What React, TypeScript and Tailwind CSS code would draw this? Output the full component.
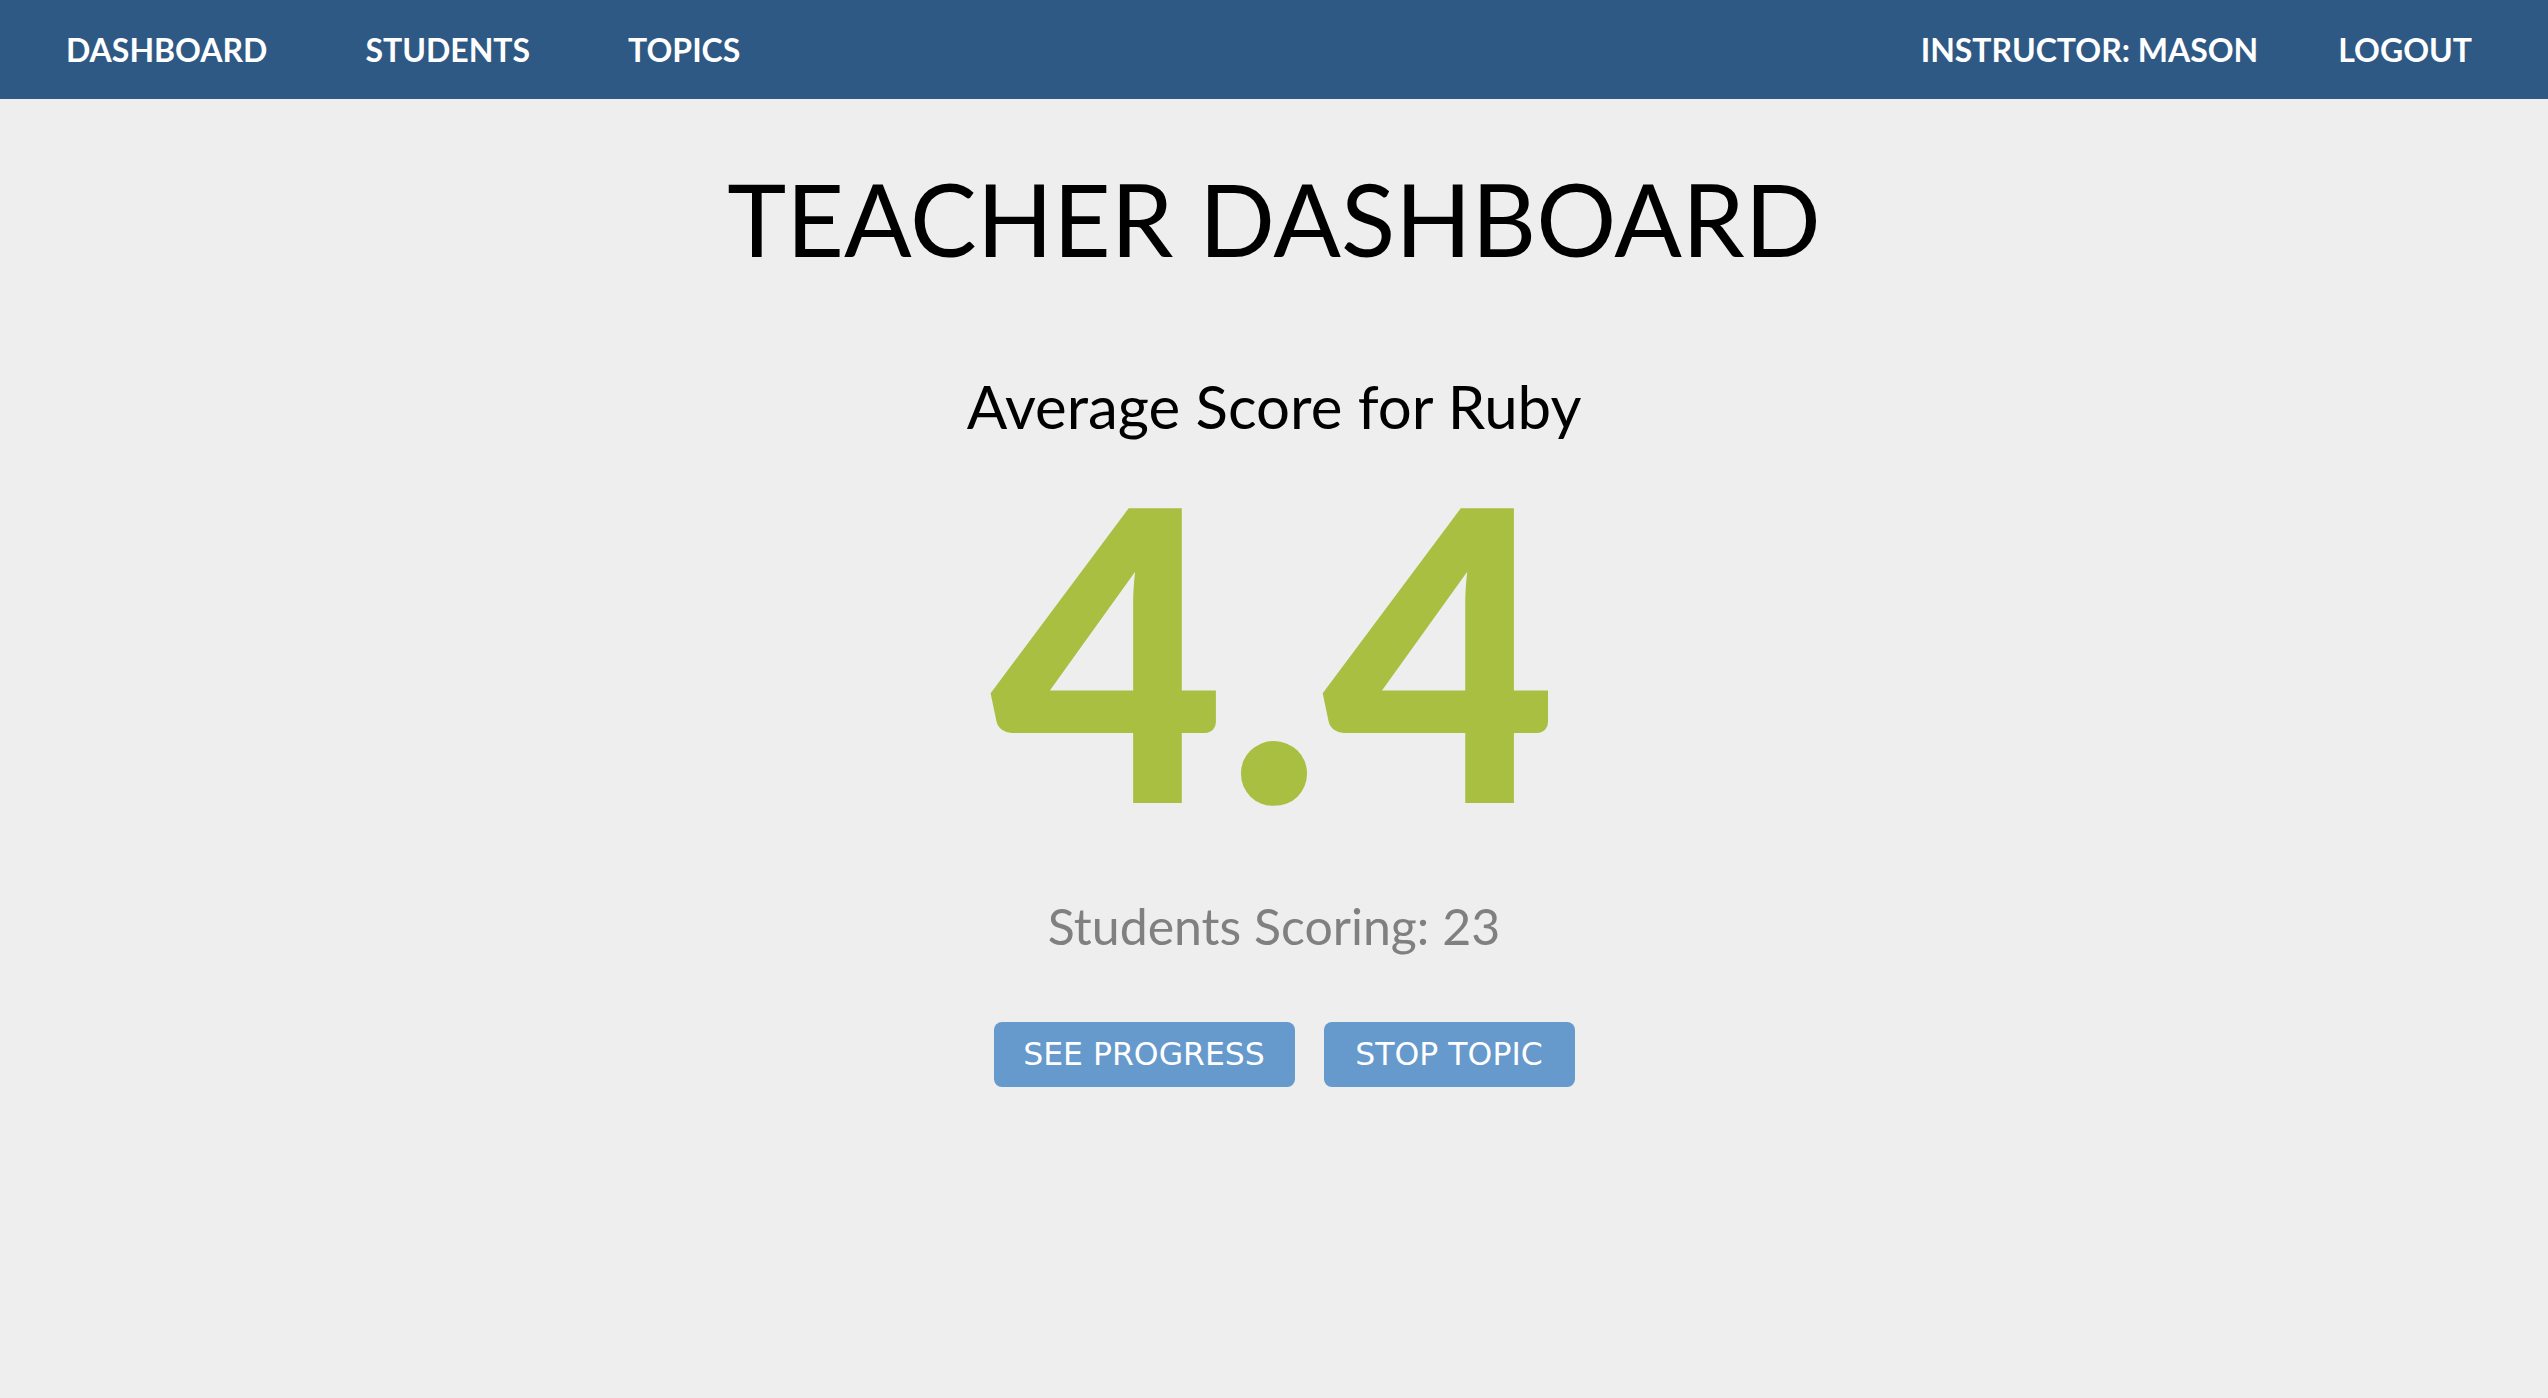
import React from "react";

const leftLinks = ["DASHBOARD", "STUDENTS", "TOPICS"];
const rightLinks = ["INSTRUCTOR: MASON", "LOGOUT"];

function NavBar() {
  return (
    <nav className="flex h-[99px] items-center justify-between bg-[#2f5985] pl-[17px] pr-[36px] font-['Lato',sans-serif] text-[32px] font-bold text-white">
      <ul className="flex items-center">
        {leftLinks.map((link) => (
          <li key={link}>
            <a href="#" className="block px-[49px] leading-none">
              {link}
            </a>
          </li>
        ))}
      </ul>
      <ul className="flex items-center">
        {rightLinks.map((link) => (
          <li key={link}>
            <a href="#" className="block px-[40px] leading-none">
              {link}
            </a>
          </li>
        ))}
      </ul>
    </nav>
  );
}

function ActionButton({ label, width }: { label: string; width: string }) {
  return (
    <button
      className={`flex h-[65px] items-center justify-center rounded-[8px] bg-[#6699cc] font-['DejaVu_Sans',sans-serif] text-[31.5px] leading-none text-white ${width}`}
    >
      {label}
    </button>
  );
}

export default function App() {
  return (
    <div className="min-h-[1398px] bg-[#eeeeee]">
      <NavBar />
      <main className="flex flex-col items-center font-['Lato',sans-serif]">
        <h1 className="mt-[69px] text-[100px] font-normal leading-none text-black">
          TEACHER DASHBOARD
        </h1>
        <h2 className="mt-[108px] text-[60px] font-normal leading-none text-black">
          Average Score for Ruby
        </h2>
        <div className="mt-[7px] text-[406px] font-black leading-none text-[#a8bf42]">
          4.4
        </div>
        <p className="mt-[52px] text-[50px] leading-none text-[#808080]">
          Students Scoring: 23
        </p>
        <div className="mt-[71px] flex gap-[29px] pl-[20px]">
          <ActionButton label="SEE PROGRESS" width="w-[301px]" />
          <ActionButton label="STOP TOPIC" width="w-[251px]" />
        </div>
      </main>
    </div>
  );
}
